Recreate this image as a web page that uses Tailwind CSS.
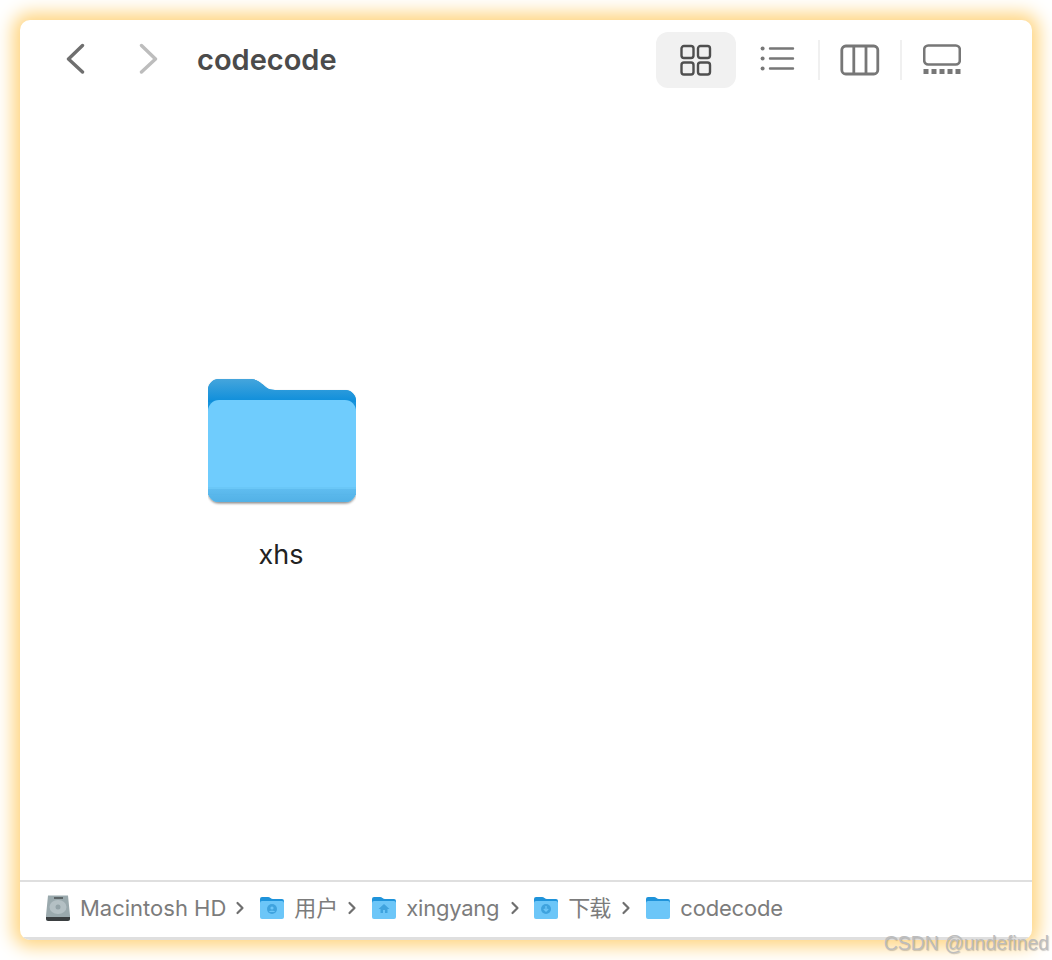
<!DOCTYPE html>
<html lang="zh">
<head>
<meta charset="utf-8">
<title>codecode</title>
<script src="https://cdn.jsdelivr.net/npm/@tailwindcss/browser@4"></script>
</head>
<body class="bg-white">
<div class="relative w-[1052px] h-[960px] p-5 overflow-hidden bg-white font-['Inter','Noto_Sans_CJK_SC',sans-serif]">
  <!-- Finder window -->
  <div class="flex flex-col h-[920px] bg-white rounded-[10px] shadow-[0_0_18px_7px_#ffd580] overflow-hidden">
    <!-- Toolbar -->
    <div class="flex items-start h-[84px] pt-3">
      <button class="ml-[45px] mt-[10px] w-6 h-8">
        <svg class="w-6 h-8" viewBox="0 0 24 32" fill="none" stroke="#6f6f6f" stroke-width="3.400" stroke-linecap="round" stroke-linejoin="round"><path d="M17.500 3.500 3.500 17l14 13"/></svg>
      </button>
      <button class="ml-[48px] mt-[10px] w-6 h-8">
        <svg class="w-6 h-8" viewBox="0 0 24 32" fill="none" stroke="#bdbdbd" stroke-width="3.400" stroke-linecap="round" stroke-linejoin="round"><path d="M4.500 3.500 18.500 17 4.500 30"/></svg>
      </button>
      <h1 class="ml-[36px] mt-[9px] text-[29px] leading-[38px] font-semibold text-[#4b4b4b]">codecode</h1>
      <div class="flex items-start ml-auto mr-[71px]">
        <div class="flex items-center justify-center w-20 h-14 rounded-xl bg-[#f1f1f1]">
          <svg class="w-8 h-8" viewBox="0 0 32 32" fill="none" stroke="#4f4f4f" stroke-width="2.400"><rect x="1.500" y="2" width="12" height="12" rx="2.500"/><rect x="18" y="2" width="12" height="12" rx="2.500"/><rect x="1.500" y="18.500" width="12" height="12" rx="2.500"/><rect x="18" y="18.500" width="12" height="12" rx="2.500"/></svg>
        </div>
        <div class="flex items-center justify-center ml-6 w-9 h-14">
          <svg class="w-9 h-8" viewBox="0 0 36 32" fill="none" stroke="#777" stroke-width="2.400" stroke-linecap="round"><path d="M10 4.500h23M10 14.500h23M10 24.500h23"/><circle cx="2.600" cy="4.500" r="2" fill="#777" stroke="none"/><circle cx="2.600" cy="14.500" r="2" fill="#777" stroke="none"/><circle cx="2.600" cy="24.500" r="2" fill="#777" stroke="none"/></svg>
        </div>
        <div class="ml-[22px] mt-2 w-0.5 h-10 bg-[#f0f0f0]"></div>
        <div class="flex items-center justify-center ml-[20px] w-10 h-14">
          <svg class="w-10 h-8" viewBox="0 0 40 32" fill="none" stroke="#777" stroke-width="2.800"><rect x="1.800" y="2" width="36" height="28" rx="4"/><path d="M13.800 2v28M26 2v28"/></svg>
        </div>
        <div class="ml-[20px] mt-2 w-0.5 h-10 bg-[#f0f0f0]"></div>
        <div class="flex items-center justify-center ml-[21px] w-[38px] h-14">
          <svg class="w-[38px] h-8" viewBox="0 0 38 32" fill="#777"><rect x="1.200" y="1.500" width="35.600" height="19" rx="4" fill="none" stroke="#777" stroke-width="2.600"/><rect x="0.500" y="25" width="5" height="5"/><rect x="8.500" y="25" width="5" height="5"/><rect x="16.500" y="25" width="5" height="5"/><rect x="24.500" y="25" width="5" height="5"/><rect x="32.500" y="25" width="5" height="5"/></svg>
        </div>
      </div>
    </div>

    <!-- Icon view -->
    <div class="flex-1 pl-[173px] pt-[274px]">
      <div class="flex flex-col items-center w-[176px]">
        <svg class="w-[148px] h-[128px] ml-[2px]" viewBox="0 0 148 128">
          <defs>
            <filter id="folderShadow" x="-5%" y="-5%" width="110%" height="112%"><feDropShadow dx="0" dy="1.500" stdDeviation="1.200" flood-color="#000" flood-opacity="0.45"/></filter>
            <linearGradient id="folderBack" x1="0" y1="0" x2="0" y2="1"><stop offset="0" stop-color="#45a5dc"/><stop offset="1" stop-color="#0d8edb"/></linearGradient>
            <linearGradient id="folderBand" x1="0" y1="0" x2="0" y2="1"><stop offset="0" stop-color="#60bdf0"/><stop offset="1" stop-color="#52b1e6"/></linearGradient>
          </defs>
          <g filter="url(#folderShadow)">
            <path d="M0 12A11 11 0 0 1 11 1h30c6 0 9 1.500 13 5 4 3 6 6 13 6h70a11 11 0 0 1 11 11v90a11 11 0 0 1-11 11H11A11 11 0 0 1 0 113z" fill="#1793dc"/>
          </g>
          <path d="M0 24V12A11 11 0 0 1 11 1h30c6 0 9 1.500 13 5 4 3 6 6 13 6h70a11 11 0 0 1 11 11v1z" fill="url(#folderBack)"/>
          <path d="M0 33a11 11 0 0 1 11-11h126a11 11 0 0 1 11 11v80a11 11 0 0 1-11 11H11A11 11 0 0 1 0 113z" fill="#6fccfd"/>
          <path d="M0 113a11 11 0 0 0 11 11h126a11 11 0 0 0 11-11v-3H0z" fill="url(#folderBand)"/>
          <rect x="0" y="109" width="148" height="2" fill="#6ac7f7"/>
          <rect x="0" y="116" width="148" height="1" fill="#58b6ea"/>
        </svg>
        <span class="mt-[31px] text-[27px] leading-9 text-[#222]">xhs</span>
      </div>
    </div>

    <!-- Path bar -->
    <div class="flex items-center h-[60px] pl-[25px] pb-[3px] border-t-2 border-b-[3px] border-[#dfdfdf] text-[22px] text-[#7c7c7c] whitespace-nowrap">
      <svg class="w-[26px] h-[28px] shrink-0" viewBox="0 0 26 28">
        <path d="M3 1.500h20l2 20v3a2.500 2.500 0 0 1-2.500 2.500h-19A2.500 2.500 0 0 1 1 24.500v-3z" fill="#9aa9ad"/>
        <path d="M1 23h24v1.500a2.500 2.500 0 0 1-2.500 2.500h-19A2.500 2.500 0 0 1 1 24.500z" fill="#3b3f41"/>
        <ellipse cx="13" cy="13" rx="8.500" ry="7" fill="#b4c0c4"/>
        <circle cx="13" cy="13" r="2.500" fill="#93a2a7"/>
        <rect x="9" y="3" width="9" height="2" fill="#5c6567"/>
      </svg>
      <span class="ml-[9px]">Macintosh HD</span>
      <svg class="w-[10px] h-[14px] ml-[9px] mr-[14px]" viewBox="0 0 10 14" fill="none" stroke="#6f6f6f" stroke-width="2.200" stroke-linecap="round" stroke-linejoin="round"><path d="M2.500 2 7.500 7l-5 5"/></svg>
      <svg class="w-[26px] h-6 shrink-0" viewBox="0 0 26 24"><path d="M1 3a2 2 0 0 1 2-2h6c2 0 3 2 5 2h9a2 2 0 0 1 2 2v3H1z" fill="#1f93da"/><rect x="1" y="5" width="24" height="18" rx="2" fill="#6cc6f8"/><circle cx="13" cy="13" r="5" fill="#3fa3de"/><circle cx="13" cy="12" r="1.600" fill="#6cc6f8"/><path d="M9.800 16c.7-1.800 5.700-1.800 6.400 0z" fill="#6cc6f8"/></svg>
      <span class="ml-[9px]">用户</span>
      <svg class="w-[10px] h-[14px] ml-[9px] mr-[14px]" viewBox="0 0 10 14" fill="none" stroke="#6f6f6f" stroke-width="2.200" stroke-linecap="round" stroke-linejoin="round"><path d="M2.500 2 7.500 7l-5 5"/></svg>
      <svg class="w-[26px] h-6 shrink-0" viewBox="0 0 26 24"><path d="M1 3a2 2 0 0 1 2-2h6c2 0 3 2 5 2h9a2 2 0 0 1 2 2v3H1z" fill="#1f93da"/><rect x="1" y="5" width="24" height="18" rx="2" fill="#6cc6f8"/><path d="M13 8 7.500 13H9.500v4h2.500v-3h2v3h2.500v-4h2z" fill="#3fa3de"/></svg>
      <span class="ml-[9px] tracking-[-0.25px]">xingyang</span>
      <svg class="w-[10px] h-[14px] ml-[11px] mr-[13px]" viewBox="0 0 10 14" fill="none" stroke="#6f6f6f" stroke-width="2.200" stroke-linecap="round" stroke-linejoin="round"><path d="M2.500 2 7.500 7l-5 5"/></svg>
      <svg class="w-[26px] h-6 shrink-0" viewBox="0 0 26 24"><path d="M1 3a2 2 0 0 1 2-2h6c2 0 3 2 5 2h9a2 2 0 0 1 2 2v3H1z" fill="#1f93da"/><rect x="1" y="5" width="24" height="18" rx="2" fill="#6cc6f8"/><circle cx="13" cy="13" r="5" fill="#3fa3de"/><path d="M13 10v5M10.800 13l2.200 2.200 2.200-2.200" fill="none" stroke="#6cc6f8" stroke-width="1.300"/></svg>
      <span class="ml-[9px] tracking-[-1px]">下载</span>
      <svg class="w-[10px] h-[14px] ml-[11px] mr-[14px]" viewBox="0 0 10 14" fill="none" stroke="#6f6f6f" stroke-width="2.200" stroke-linecap="round" stroke-linejoin="round"><path d="M2.500 2 7.500 7l-5 5"/></svg>
      <svg class="w-[26px] h-6 shrink-0" viewBox="0 0 26 24"><path d="M1 3a2 2 0 0 1 2-2h6c2 0 3 2 5 2h9a2 2 0 0 1 2 2v3H1z" fill="#1f93da"/><rect x="1" y="5" width="24" height="18" rx="2" fill="#6cc6f8"/></svg>
      <span class="ml-[9px] tracking-[-0.2px]">codecode</span>
    </div>
  </div>

  <!-- Watermark -->
  <span class="absolute right-[3px] top-[931px] text-[19.400px] leading-6 text-[#bdbdbd] font-['Liberation_Sans',sans-serif] [text-shadow:1px_1px_1px_rgba(0,0,0,0.2)]">CSDN @undefined</span>
</div>
</body>
</html>
